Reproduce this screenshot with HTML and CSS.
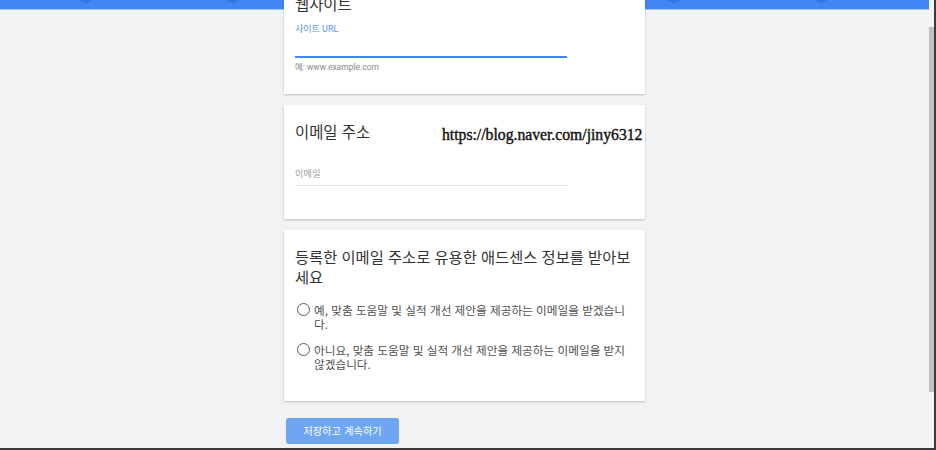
FILE: index.html
```html
<!DOCTYPE html>
<html lang="ko">
<head>
<meta charset="utf-8">
<title>애드센스 가입</title>
<link rel="stylesheet" href="styles.css">
</head>
<body>
<div class="window">
  <div class="viewport">
    <main class="page">
      <div class="band">
        <svg class="band-pattern" width="929" height="9" viewBox="0 0 929 9" aria-hidden="true">
          <polygon points="79,0 92,0 86,3.5" fill="#3873d9"/>
          <polygon points="226,0 239,0 233,3.5" fill="#3873d9"/>
          <polygon points="373,0 386,0 380,3.5" fill="#3873d9"/>
          <polygon points="520,0 533,0 527,3.5" fill="#3873d9"/>
          <polygon points="667,0 680,0 674,3.5" fill="#3873d9"/>
          <polygon points="814,0 827,0 821,3.5" fill="#3873d9"/>
        </svg>
      </div>
      <div class="column">
        <section class="card card-site">
          <h2 class="card-title">웹사이트</h2>
          <div class="label label-active">사이트 URL</div>
          <div class="input input-focused"></div>
          <div class="helper">예: www.example.com</div>
        </section>
        <section class="card card-email">
          <h2 class="card-title">이메일 주소</h2>
          <div class="input input-empty"><span class="placeholder">이메일</span></div>
          <div class="watermark">https://blog.naver.com/jiny6312</div>
        </section>
        <section class="card card-opt">
          <h2 class="card-title card-title-long">등록한 이메일 주소로 유용한 애드센스 정보를 받아보세요</h2>
          <label class="option">
            <span class="radio"></span>
            <span class="option-text">예, 맞춤 도움말 및 실적 개선 제안을 제공하는 이메일을 받겠습니다.</span>
          </label>
          <label class="option option-second">
            <span class="radio"></span>
            <span class="option-text">아니요, 맞춤 도움말 및 실적 개선 제안을 제공하는 이메일을 받지 않겠습니다.</span>
          </label>
        </section>
        <button class="save">저장하고 계속하기</button>
      </div>
    </main>
    <div class="scrollbar"><div class="thumb"></div></div>
  </div>
  <div class="bottom-edge"></div>
</div>
</body>
</html>
```

FILE: styles.css
```css
html, body {
  margin: 0;
  padding: 0;
  width: 936px;
  height: 450px;
  overflow: hidden;
}

body {
  font-family: Roboto, "Noto Sans CJK KR", sans-serif;
  color: #333;
}

.window {
  display: flex;
  flex-direction: column;
  height: 450px;
}

.viewport {
  display: flex;
  flex: 1;
  min-height: 0;
}

.page {
  flex: 1;
  background: #f1f2f4;
  overflow: hidden;
  position: relative;
}

.band {
  height: 9px;
  background: #4285f4;
  border-bottom: 1px solid #a4c4f8;
}

.band-pattern {
  display: block;
}

.column {
  width: 361px;
  margin-left: 284px;
  margin-top: -37px;
  position: relative;
  display: flex;
  flex-direction: column;
}

.card {
  background: #fff;
  box-shadow: 0 1px 2px rgba(0, 0, 0, 0.22);
  padding: 16px 11px 0 11px;
  position: relative;
}

.card + .card {
  margin-top: 11px;
}

.card-site {
  padding-top: 20px;
  padding-bottom: 21px;
}

.card-email {
  padding-bottom: 33px;
}

.card-opt {
  padding-bottom: 30px;
}

.card-title {
  margin: 0;
  font-family: "Noto Sans CJK KR", Roboto, sans-serif;
  font-weight: 400;
  font-size: 15.4px;
  line-height: 20px;
  color: #333;
}

.card-title-long {
  font-size: 15.3px;
}

.label {
  margin-top: 10px;
  font-size: 9px;
  line-height: 12px;
}

.label-active {
  color: #5c95f2;
}

.input {
  width: 272px;
}

.input-focused {
  height: 21px;
  border-bottom: 2px solid #4285f4;
}

.input-empty {
  margin-top: 27px;
  padding-bottom: 5px;
  border-bottom: 1px solid #e6e6e6;
}

.placeholder {
  display: block;
  font-size: 9px;
  line-height: 12px;
  color: #9a9a9a;
  letter-spacing: 0.3px;
}

.helper {
  margin-top: 4px;
  font-size: 8.5px;
  line-height: 11px;
  color: #8a8a8a;
}

.watermark {
  position: absolute;
  left: 158px;
  top: 22px;
  font-family: "Liberation Serif", serif;
  font-size: 15.7px;
  line-height: 16px;
  color: #111;
  -webkit-text-stroke: 0.4px #111;
  white-space: nowrap;
}

.option {
  display: flex;
  align-items: flex-start;
  gap: 4px;
  margin-top: 17px;
  padding-left: 2px;
}

.option-second {
  margin-top: 12px;
}

.radio {
  flex: none;
  width: 11px;
  height: 11px;
  margin-top: 0;
  border: 1.5px solid #56595e;
  border-radius: 50%;
}

.option-text {
  font-family: "Noto Sans CJK KR", Roboto, sans-serif;
  font-size: 11.65px;
  line-height: 14px;
  color: #505050;
}

.save {
  align-self: flex-start;
  margin: 17px 0 0 2px;
  width: 113px;
  height: 26px;
  padding: 0;
  border: none;
  border-radius: 3px;
  background: #6ea6f2;
  color: #fff;
  font-family: "Noto Sans CJK KR", Roboto, sans-serif;
  font-size: 10.3px;
  line-height: 26px;
  text-align: center;
}

.scrollbar {
  width: 5px;
  background: #f4f4f4;
  border-right: 2px solid #3a3a3a;
  padding-top: 27px;
}

.thumb {
  height: 365px;
  background: #c1c1c1;
}

.bottom-edge {
  height: 2px;
  background: #3a3a3a;
}
```
